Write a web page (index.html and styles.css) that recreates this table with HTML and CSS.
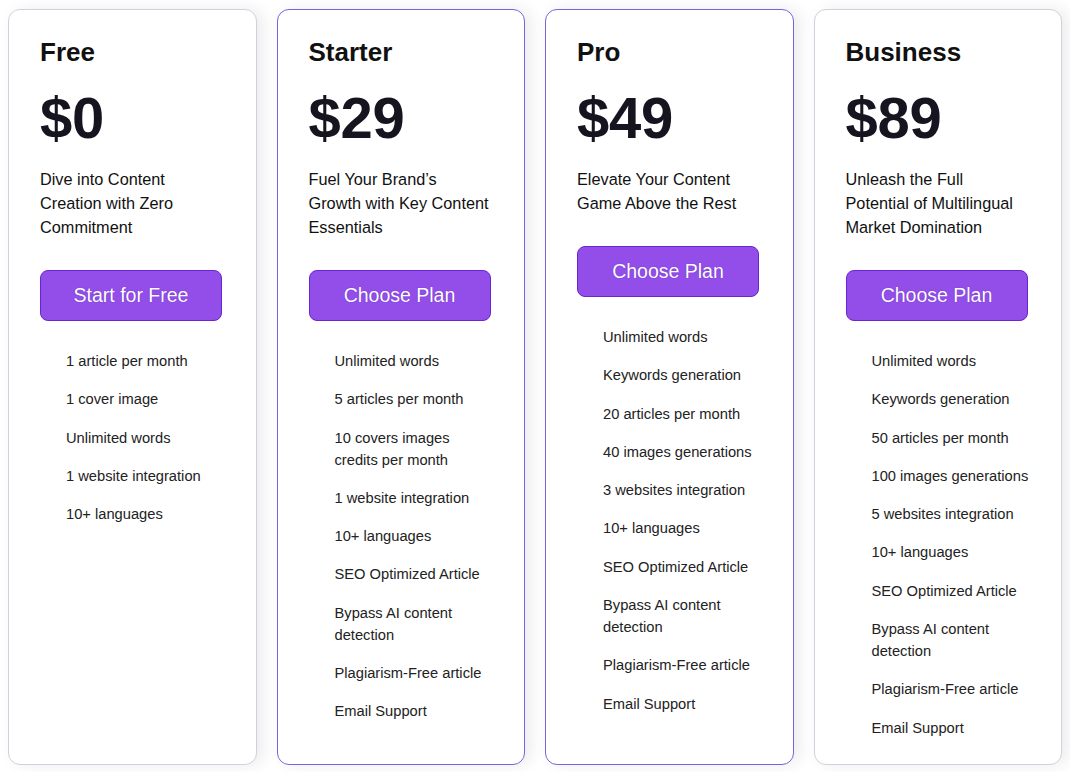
FILE: index.html
```html
<!DOCTYPE html>
<html>
<head>
<meta charset="utf-8">
<title>Pricing</title>
<link rel="stylesheet" href="styles.css">
</head>
<body>
<div class="plans">

	<div class="card">
		<h2 class="name">Free</h2>
		<div class="price">$0</div>
		<p class="desc">Dive into Content Creation with Zero Commitment</p>
		<a class="btn" href="#">Start for Free</a>
		<ul class="features">
			<li>1 article per month</li>
			<li>1 cover image</li>
			<li>Unlimited words</li>
			<li>1 website integration</li>
			<li>10+ languages</li>
		</ul>
	</div>

	<div class="card hot">
		<h2 class="name">Starter</h2>
		<div class="price">$29</div>
		<p class="desc">Fuel Your Brand’s Growth with Key Content Essentials</p>
		<a class="btn" href="#">Choose Plan</a>
		<ul class="features">
			<li>Unlimited words</li>
			<li>5 articles per month</li>
			<li>10 covers images credits per month</li>
			<li>1 website integration</li>
			<li>10+ languages</li>
			<li>SEO Optimized Article</li>
			<li>Bypass AI content detection</li>
			<li>Plagiarism-Free article</li>
			<li>Email Support</li>
		</ul>
	</div>

	<div class="card hot">
		<h2 class="name">Pro</h2>
		<div class="price">$49</div>
		<p class="desc">Elevate Your Content Game Above the Rest</p>
		<a class="btn" href="#">Choose Plan</a>
		<ul class="features">
			<li>Unlimited words</li>
			<li>Keywords generation</li>
			<li>20 articles per month</li>
			<li>40 images generations</li>
			<li>3 websites integration</li>
			<li>10+ languages</li>
			<li>SEO Optimized Article</li>
			<li>Bypass AI content detection</li>
			<li>Plagiarism-Free article</li>
			<li>Email Support</li>
		</ul>
	</div>

	<div class="card">
		<h2 class="name">Business</h2>
		<div class="price">$89</div>
		<p class="desc">Unleash the Full Potential of Multilingual Market Domination</p>
		<a class="btn" href="#">Choose Plan</a>
		<ul class="features">
			<li>Unlimited words</li>
			<li>Keywords generation</li>
			<li>50 articles per month</li>
			<li>100 images generations</li>
			<li>5 websites integration</li>
			<li>10+ languages</li>
			<li>SEO Optimized Article</li>
			<li>Bypass AI content detection</li>
			<li>Plagiarism-Free article</li>
			<li>Email Support</li>
		</ul>
	</div>

</div>
</body>
</html>
```

FILE: styles.css
```css
*{margin:0;padding:0;box-sizing:border-box;}
body{background:#fff;font-family:"Liberation Sans",Arial,sans-serif;color:#111;}
.plans{display:flex;gap:20px;padding:9px 8px 7px;height:772px;}
.card{flex:1;background:#fff;border:1px solid #cdd2dc;border-radius:12px;padding:27px 31px 20px;box-shadow:6px 0 16px rgba(0,0,0,0.08);display:flex;flex-direction:column;}
.card.hot{border-color:#7566d8;}

.name{font-size:26px;font-weight:bold;line-height:30px;color:#111;}
.price{font-size:58px;font-weight:bold;line-height:68px;margin-top:17px;color:#16151f;letter-spacing:-0.3px;}
.desc{font-size:16.3px;line-height:24px;margin-top:15px;color:#111;}

.btn{display:block;margin-top:31px;width:182px;height:51px;line-height:49px;text-align:center;background:#934ee9;border:1px solid #6a24d0;border-radius:8px;color:#fff;font-size:19.5px;text-decoration:none;text-shadow:0 0 1px rgba(60,0,140,0.6);}

.features{list-style:none;margin-top:29px;padding-left:26px;}
.features li{font-size:14.7px;line-height:22px;color:#222;margin-bottom:16.3px;}
```
